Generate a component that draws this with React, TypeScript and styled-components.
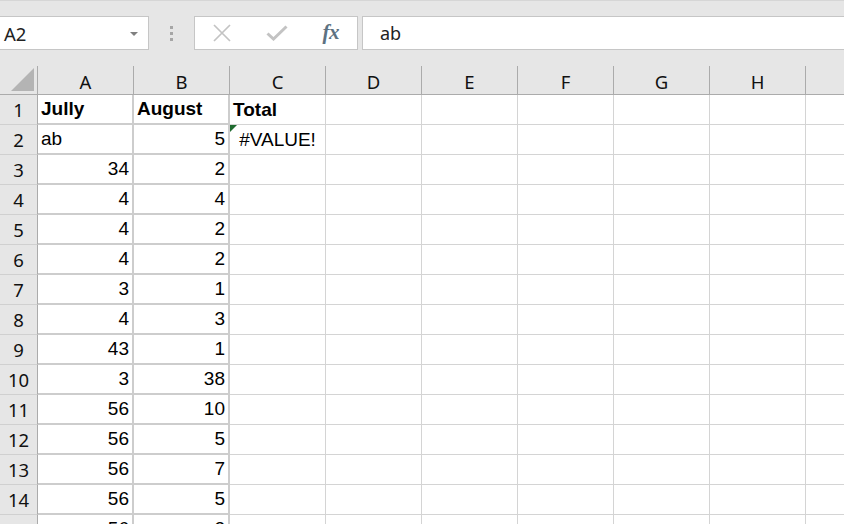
import React from "react"
import styled, { createGlobalStyle } from "styled-components"

const GlobalStyle = createGlobalStyle`
  html, body {
    margin: 0;
    padding: 0;
    background: #e6e6e6;
    overflow: hidden;
  }
  body {
    width: 844px;
    height: 524px;
  }
`

const UI_FONT = `"Noto Sans", "Open Sans", Arial, sans-serif`
const CELL_FONT = `"Liberation Sans", Arial, sans-serif`

const columns = ["A", "B", "C", "D", "E", "F", "G", "H", "I"]

type CellData = { text: string; align?: "left" | "right" | "center"; bold?: boolean }

const julyValues = ["34", "4", "4", "4", "3", "4", "43", "3", "56", "56", "56", "56", "56"]
const augustValues = ["2", "4", "2", "2", "1", "3", "1", "38", "10", "5", "7", "5", "2"]

const rows: CellData[][] = [
  [
    { text: "Jully", bold: true, align: "left" },
    { text: "August", bold: true, align: "left" },
    { text: "Total", bold: true, align: "left" },
  ],
  [
    { text: "ab", align: "left" },
    { text: "5", align: "right" },
    { text: "#VALUE!", align: "center" },
  ],
  ...julyValues.map((v, i) => [
    { text: v, align: "right" as const },
    { text: augustValues[i], align: "right" as const },
  ]),
]

export default function App() {
  return (
    <>
      <GlobalStyle />
      <Window>
        <TopStrip />
        <FormulaBar>
          <NameBox>
            <span>A2</span>
            <DropArrow />
          </NameBox>
          <Grip>
            <i />
            <i />
            <i />
          </Grip>
          <FormulaButtons>
            <svg width="18" height="18" viewBox="0 0 18 18">
              <path d="M1 1 L17 17 M17 1 L1 17" stroke="#c3c3c3" strokeWidth="1.7" fill="none" />
            </svg>
            <svg width="22" height="16" viewBox="0 0 22 16">
              <path d="M1.5 8.5 L7.5 14 L20.5 1.5" stroke="#c3c3c3" strokeWidth="3" fill="none" />
            </svg>
            <FxLabel>fx</FxLabel>
          </FormulaButtons>
          <FormulaInput>ab</FormulaInput>
        </FormulaBar>
        <Sheet>
          <Corner>
            <svg width="23" height="23" viewBox="0 0 23 23">
              <polygon points="23,0 23,23 0,23" fill="#b4b4b4" />
            </svg>
          </Corner>
          {columns.map((c) => (
            <ColHeader key={c}>{c}</ColHeader>
          ))}
          {Array.from({ length: 15 }, (_, r) => (
            <React.Fragment key={r}>
              <RowHeader>{r + 1}</RowHeader>
              {columns.map((c, ci) => {
                const data = rows[r]?.[ci]
                return (
                  <Cell
                    key={c}
                    $thick={ci < 2}
                    $align={data?.align ?? "left"}
                    $bold={data?.bold}
                  >
                    {r === 1 && ci === 2 && <ErrorMark />}
                    {data?.text}
                  </Cell>
                )
              })}
            </React.Fragment>
          ))}
        </Sheet>
      </Window>
    </>
  )
}

const Window = styled.div`
  width: 844px;
  height: 524px;
  overflow: hidden;
  background: #e6e6e6;
`

const TopStrip = styled.div`
  height: 16px;
  box-sizing: border-box;
  border-top: 1px solid #d6d6d6;
`

const FormulaBar = styled.div`
  display: flex;
  align-items: stretch;
  height: 34px;
  margin-bottom: 16px;
`

const NameBox = styled.div`
  width: 149px;
  box-sizing: border-box;
  background: #fff;
  border: 1px solid #c6c6c6;
  border-left: none;
  display: flex;
  align-items: center;
  justify-content: space-between;
  padding: 0 10px 0 4px;
  font-family: ${UI_FONT};
  font-size: 18.5px;
  color: #222;
`

const DropArrow = styled.span`
  width: 0;
  height: 0;
  border-left: 4px solid transparent;
  border-right: 4px solid transparent;
  border-top: 4px solid #808080;
  margin-top: 2px;
`

const Grip = styled.div`
  width: 45px;
  display: flex;
  flex-direction: column;
  align-items: center;
  justify-content: center;
  gap: 3px;

  i {
    display: block;
    width: 3px;
    height: 3px;
    background: #a6a6a6;
  }
`

const FormulaButtons = styled.div`
  width: 164px;
  box-sizing: border-box;
  background: #fff;
  border: 1px solid #c6c6c6;
  display: flex;
  align-items: center;
  padding: 0 18px 0 18px;
  justify-content: space-between;
`

const FxLabel = styled.span`
  font-family: "Liberation Serif", "Times New Roman", serif;
  font-style: italic;
  font-weight: 700;
  font-size: 21px;
  color: #5d7282;
  letter-spacing: -0.5px;
  margin-top: -2px;
`

const FormulaInput = styled.div`
  flex: 1;
  margin-left: 4px;
  box-sizing: border-box;
  background: #fff;
  border: 1px solid #c6c6c6;
  border-right: none;
  display: flex;
  align-items: center;
  padding-left: 17px;
  font-family: ${UI_FONT};
  font-size: 18px;
  color: #222;
`

const Sheet = styled.div`
  display: grid;
  grid-template-columns: 38px repeat(9, 96px);
  grid-template-rows: 29px repeat(15, 30px);
  background: #fff;
`

const Corner = styled.div`
  background: #e6e6e6;
  box-sizing: border-box;
  border-right: 1px solid #ababab;
  border-bottom: 1px solid #ababab;
  display: flex;
  align-items: flex-end;
  justify-content: flex-end;
  padding: 0 3px 3px 0;
`

const ColHeader = styled.div`
  background: #e6e6e6;
  box-sizing: border-box;
  border-right: 1px solid #ababab;
  border-bottom: 1px solid #ababab;
  display: flex;
  align-items: flex-end;
  justify-content: center;
  padding-bottom: 3px;
  font-family: ${UI_FONT};
  font-size: 18.5px;
  line-height: 1;
  color: #111;
`

const RowHeader = styled.div`
  background: #e6e6e6;
  box-sizing: border-box;
  border-right: 1px solid #ababab;
  border-bottom: 1px solid #d0d0d0;
  text-align: center;
  font-family: ${UI_FONT};
  font-size: 18.5px;
  line-height: 30px;
  color: #111;
`

const Cell = styled.div<{ $thick?: boolean; $align: string; $bold?: boolean }>`
  position: relative;
  box-sizing: border-box;
  border-right: ${(p) => (p.$thick ? "2px solid #cdcdcd" : "1px solid #d4d4d4")};
  border-bottom: ${(p) => (p.$thick ? "2px solid #cdcdcd" : "1px solid #d4d4d4")};
  padding: 0 3px;
  text-align: ${(p) => p.$align};
  font-family: ${CELL_FONT};
  font-size: 19px;
  font-weight: ${(p) => (p.$bold ? 700 : 400)};
  line-height: ${(p) => (p.$thick ? "28px" : "29px")};
  color: #000;
  white-space: nowrap;
  overflow: visible;
`

const ErrorMark = styled.span`
  position: absolute;
  top: 0;
  left: 0;
  width: 0;
  height: 0;
  border-top: 7px solid #1f6b2f;
  border-right: 7px solid transparent;
`
